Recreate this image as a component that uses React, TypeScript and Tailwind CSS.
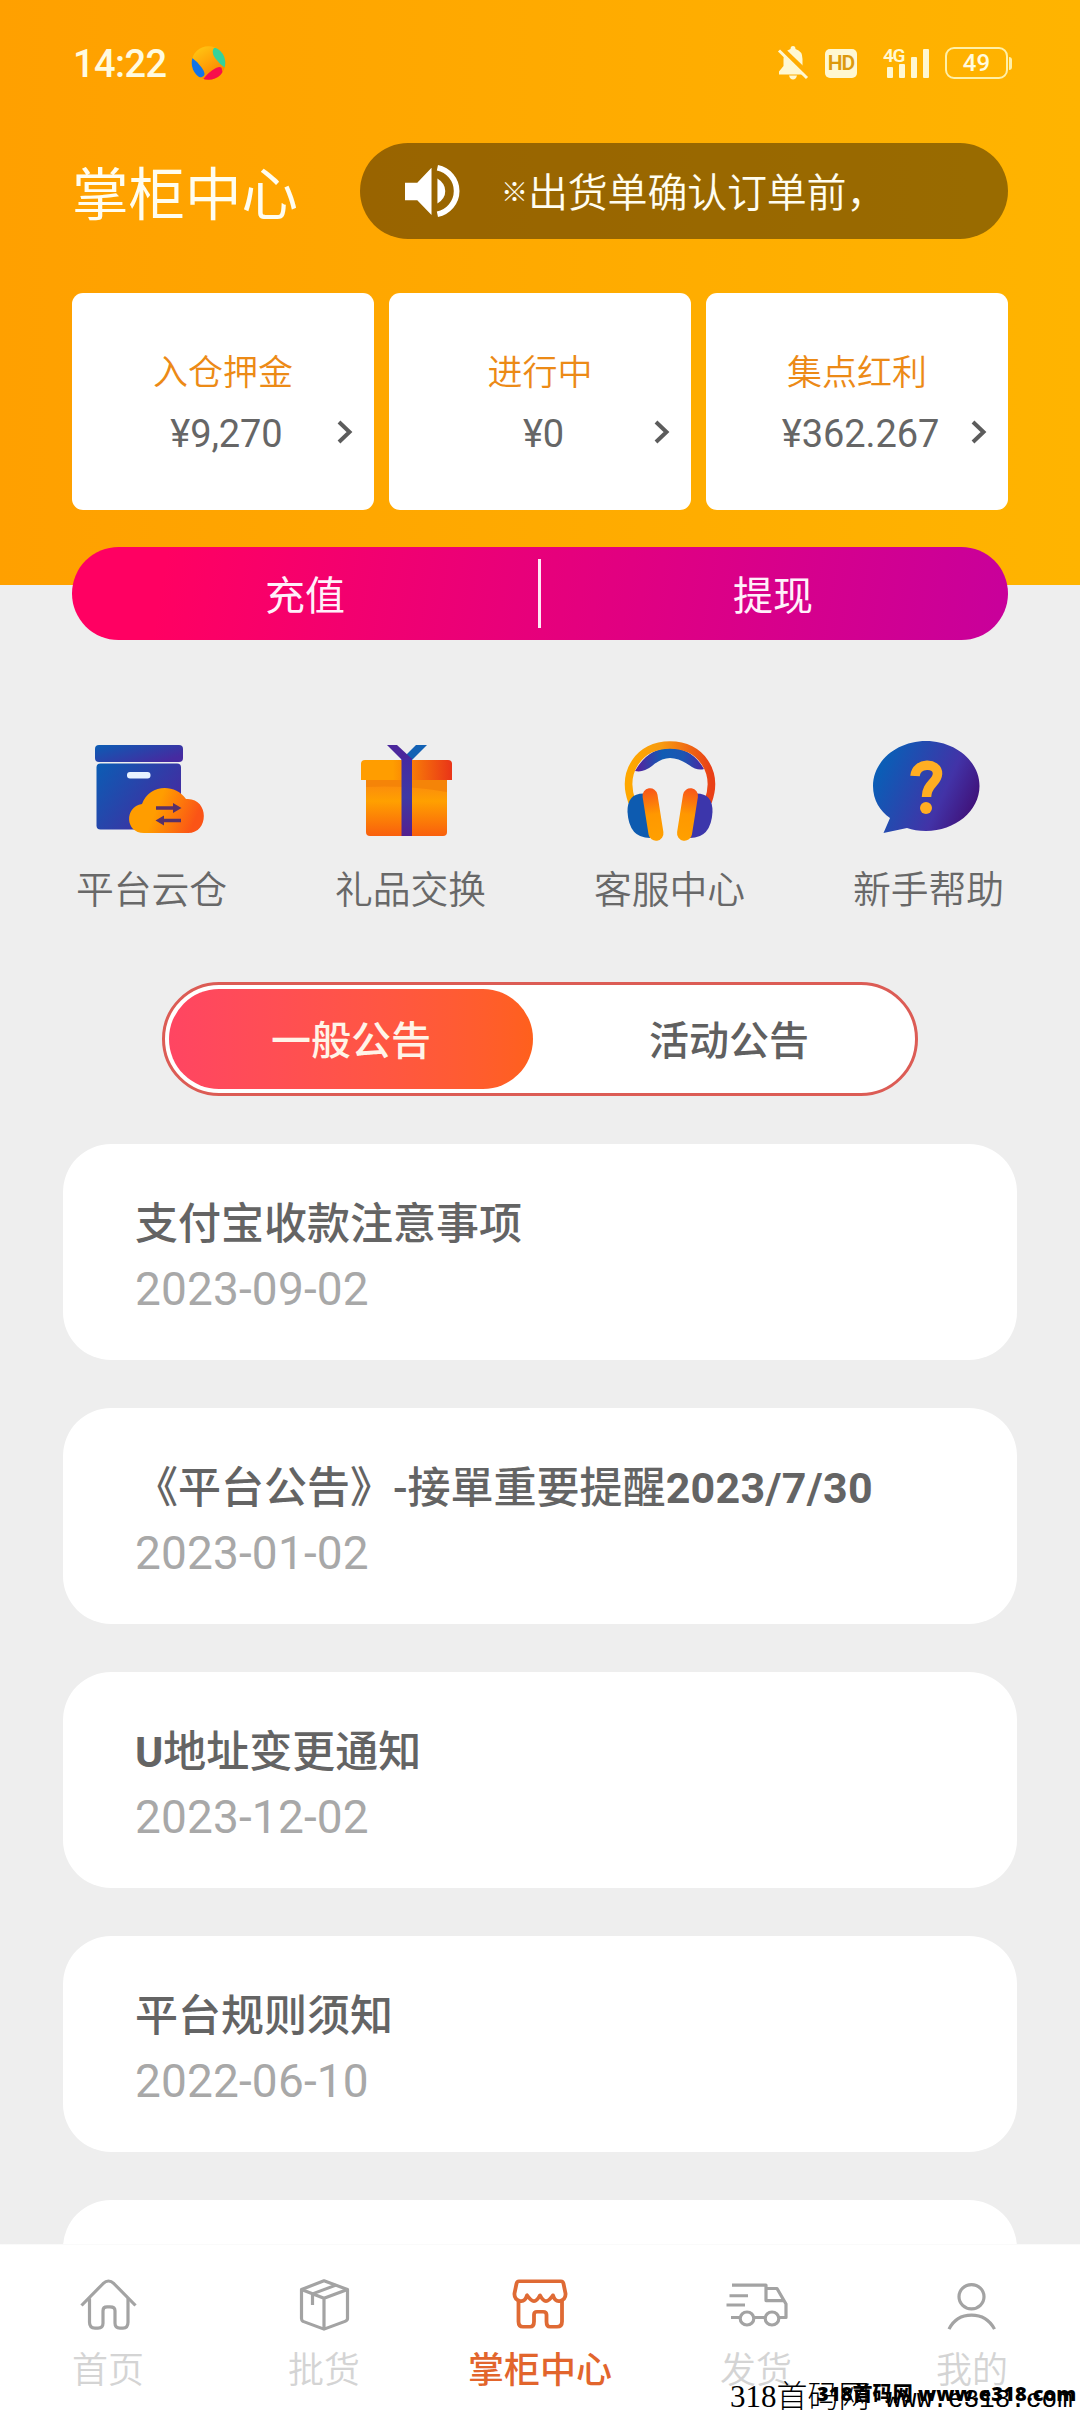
import React from "react";

const notices = [
  { title: "支付宝收款注意事项", date: "2023-09-02" },
  { title: "《平台公告》-接單重要提醒", suffix: "2023/7/30", date: "2023-01-02" },
  { prefix: "U", title: "地址变更通知", date: "2023-12-02" },
  { title: "平台规则须知", date: "2022-06-10" },
  { title: "", date: "" },
];

const balances = [
  { label: "入仓押金", value: "¥9,270" },
  { label: "进行中", value: "¥0" },
  { label: "集点红利", value: "¥362.267" },
];

function StatusBar() {
  return (
    <div className="flex h-[126px] items-start pl-[73px] pr-[68px] pt-[44.500px] text-[#fffbe0]">
      <span className="w-[94px] whitespace-nowrap text-[38px] font-medium leading-[38px] tracking-[-0.6px]">14:22</span>
      <svg className="ml-[24px] h-[36px] w-[36px]" viewBox="0 0 36 36">
        <defs>
          <clipPath id="ball"><circle cx="17.500" cy="18" r="16.800" /></clipPath>
          <linearGradient id="sun" x1="0.200" y1="0" x2="0.700" y2="0.800"><stop offset="0" stopColor="#ffc814" /><stop offset="0.600" stopColor="#ffa208" /><stop offset="1" stopColor="#f98a00" /></linearGradient>
        </defs>
        <g clipPath="url(#ball)">
          <circle cx="18" cy="18" r="18" fill="url(#sun)" />
          <path d="M0 12 Q6 16 11 23 Q16 30 11 32 Q6 33 0 32Z" fill="#1274e8" />
          <path d="M23 3 L36 2 V24 Q29 20 24 13 Q20 7 23 3Z" fill="#35d29b" />
          <path d="M11 36 Q17 27 25 23 Q31 20 31 25 Q32 30 33 36Z" fill="#f80f4b" />
        </g>
      </svg>
      <div className="ml-auto flex items-start">
        <svg className="h-[36px] w-[32px]" viewBox="0 0 32 36" fill="#fff8d2">
          <path d="M16 1 q2.500 0 2.500 3 q7 2 7 10 v7 l4.500 5.500 v3 H2 v-3 L6.500 21 v-7 q0-8 7-10 q0-3 2.500-3Z" />
          <path d="M12 30.500 h8 q-1 4 -4 4 t-4-4Z" />
          <path d="M3 2 L34 32" stroke="#ffad03" strokeWidth="5" />
          <path d="M2 5.500 L30 33" stroke="#fff8d2" strokeWidth="3" />
        </svg>
        <span className="ml-[16px] mt-[4.500px] flex h-[29px] w-[32px] items-center justify-center rounded-[5px] bg-[#fff8d2] text-[21px] font-semibold leading-none tracking-[-1px] text-[#dd9a0c]">HD</span>
        <svg className="ml-[25px] h-[36px] w-[49px]" viewBox="-1 0 49 36" fill="#fff8d2">
          <rect x="4" y="22" width="6" height="11" rx="1" />
          <rect x="16" y="19" width="6" height="14" rx="1" />
          <rect x="28" y="12" width="6" height="21" rx="1" />
          <rect x="40" y="4" width="6" height="29" rx="1" />
          <text x="0" y="16.500" fontSize="19" fontWeight="600" letterSpacing="-1.400">4G</text>
        </svg>
        <span className="ml-[14px] mt-[2.500px] flex h-[32px] w-[63px] items-center justify-center rounded-[9px] border-[2.500px] border-[#fff0a8] text-[24px] font-medium leading-none">49</span>
        <span className="ml-px mt-[12px] h-[13px] w-[3px] rounded-r-[3px] bg-[#fff0a8]" />
      </div>
    </div>
  );
}

function Speaker() {
  return (
    <svg className="ml-[45px] h-[54px] w-[55px] shrink-0" viewBox="0 0 56 56" preserveAspectRatio="none" fill="white">
      <path d="M0 19.500 H12.500 L27 4 V53 L12.500 37.500 H0Z" />
      <path d="M33 15 Q41 20 41 28 T33 41Z" />
      <path d="M33 4 A24.500 24.500 0 0 1 33 52" fill="none" stroke="white" strokeWidth="5.800" />
    </svg>
  );
}

function Header() {
  return (
    <header className="h-[585px] bg-linear-to-r from-[#ffa000] to-[#ffb400]">
      <StatusBar />
      <div className="flex h-[167px] items-start pl-[72px] pr-[72px] pt-[17px]">
        <h1 className="mt-[25px] w-[288px] whitespace-nowrap text-[56.500px] font-normal leading-none text-[#fffdf0]">掌柜中心</h1>
        <div className="flex h-[96px] flex-1 items-center rounded-full bg-black/40">
          <Speaker />
          <span className="ml-[41px] mt-[5px] flex items-center whitespace-nowrap text-[40px] font-[350] leading-none tracking-[-0.2px] text-[#fffdf0]">
            <span className="mr-px w-[26px] text-[27px] font-bold leading-none">※</span>出货单确认订单前，
          </span>
        </div>
      </div>
      <div className="grid grid-cols-3 gap-[15px] px-[72px]">
        {balances.map((b) => (
          <div key={b.label} className="relative flex h-[217px] flex-col items-center rounded-[11px] bg-white pt-[63px]">
            <span className="text-[35px] font-[350] leading-none text-[#ec8a16]">{b.label}</span>
            <span className="mt-[23.500px] pl-[7px] text-[38px] leading-none tracking-[-0.1px] text-[#666]">{b.value}</span>
            <svg className="absolute right-[21px] top-[127px] h-[24px] w-[16px]" viewBox="0 0 16 24" fill="none" stroke="#5c5c5c" strokeWidth="4">
              <path d="M2 2 L12.500 12 L2 22" />
            </svg>
          </div>
        ))}
      </div>
    </header>
  );
}

function WarehouseIcon() {
  return (
    <svg className="h-[104px] w-[120px]" viewBox="92 739 120 104">
      <defs>
        <linearGradient id="wb" x1="0" y1="0" x2="1" y2="0.6"><stop offset="0" stopColor="#0b5db4" /><stop offset="1" stopColor="#462aa0" /></linearGradient>
        <linearGradient id="wc" x1="0" y1="0" x2="1" y2="0.25"><stop offset="0.45" stopColor="#ff9d00" /><stop offset="1" stopColor="#fb5416" /></linearGradient>
      </defs>
      <rect x="95" y="745" width="88" height="17" rx="4" fill="url(#wb)" />
      <rect x="96.500" y="763.500" width="84.500" height="66" rx="4" fill="url(#wb)" />
      <rect x="127" y="772" width="23.500" height="6.500" rx="3" fill="#e8f2ff" />
      <path d="M144 833 C125 833 124 807 142 804 C149 784 175 783 186 799 C209 797 210 833 188 833Z" fill="url(#wc)" />
      <path d="M156 808 H176 M161 820.500 H181" stroke="#57306a" strokeWidth="3.600" />
      <path d="M173 803 L181.500 808 L173 813Z M164 815.500 L155.500 820.500 L164 825.500Z" fill="#57306a" />
    </svg>
  );
}

function GiftIcon() {
  return (
    <svg className="h-[104px] w-[120px]" viewBox="351 739 120 104">
      <defs>
        <linearGradient id="gl"><stop offset="0.350" stopColor="#ff9d00" /><stop offset="1" stopColor="#e93418" /></linearGradient>
        <linearGradient id="gb" x1="0" y1="0" x2="0" y2="1"><stop offset="0" stopColor="#fa8412" /><stop offset="0.400" stopColor="#ffa000" /><stop offset="1" stopColor="#f95f0d" /></linearGradient>
        <linearGradient id="gr" x1="0" y1="0" x2="0" y2="1"><stop offset="0" stopColor="#452aa2" /><stop offset="0.500" stopColor="#3e39a4" /><stop offset="1" stopColor="#53208f" /></linearGradient>
      </defs>
      <path d="M366 778 H447 V832 a4 4 0 0 1 -4 4 H370 a4 4 0 0 1 -4 -4Z" fill="url(#gb)" />
      <path d="M361 780 V764 a4 4 0 0 1 4-4 H448 a4 4 0 0 1 4 4 V780Z" fill="url(#gl)" />
      <path d="M366 780 H447 V792 Q405 785 366 787Z" fill="#f58408" />
      <path d="M427 745 H416 L404 757 L411 761Z" fill="#1261b4" />
      <path d="M387 745 H397 L411 758 L404 762Z" fill="#4b279c" />
      <path d="M401.500 836 V758 H412 V836Z" fill="url(#gr)" />
    </svg>
  );
}

function HeadphoneIcon() {
  return (
    <svg className="h-[104px] w-[120px]" viewBox="610 739 120 104">
      <defs>
        <linearGradient id="ha"><stop offset="0" stopColor="#ffa800" /><stop offset="0.400" stopColor="#f79a10" /><stop offset="1" stopColor="#e93f16" /></linearGradient>
        <linearGradient id="hc" x1="0" y1="0" x2="0" y2="1"><stop offset="0" stopColor="#f8541a" /><stop offset="0.500" stopColor="#ff9800" /><stop offset="1" stopColor="#ffa000" /></linearGradient>
        <linearGradient id="hi"><stop offset="0" stopColor="#5c1d9c" /><stop offset="0.400" stopColor="#0f5cb4" /><stop offset="0.700" stopColor="#1d55b2" /><stop offset="1" stopColor="#4b26a2" /></linearGradient>
      </defs>
      <path d="M635 771 Q648 748 670 748 T704 769 Q697 771 689 765 Q679 758 670 758 T652 766 Q643 773 635 771Z" fill="url(#hi)" />
      <path d="M632 802 C621 772 639 745 670 745 S719 772 708 802" fill="none" stroke="url(#ha)" strokeWidth="7.600" />
      <path d="M650 794 Q627 790 627.500 812 Q629 838 650 838Z" fill="#0d5bb0" />
      <path d="M690 794 Q713 790 712.500 812 Q711 838 690 838Z" fill="#3c36ab" />
      <rect x="-7.500" y="-26.500" width="15" height="53" rx="7.500" transform="translate(653 814.500) rotate(-9)" fill="url(#hc)" />
      <rect x="-7.500" y="-26.500" width="15" height="53" rx="7.500" transform="translate(687.500 814.500) rotate(9)" fill="url(#hc)" />
    </svg>
  );
}

function HelpIcon() {
  return (
    <svg className="h-[104px] w-[120px]" viewBox="869 739 120 104">
      <defs>
        <linearGradient id="qb" x1="0" y1="0.200" x2="1" y2="0.600"><stop offset="0.100" stopColor="#0b5db6" /><stop offset="0.700" stopColor="#4233a7" /><stop offset="1" stopColor="#40127a" /></linearGradient>
      </defs>
      <path d="M926 741 C955 741 979.500 761 979.500 786 S955 831 926 831 Q915 831 907 828 L883.500 833 L890 818 C880 811 873 800 873 786 C873 761 897 741 926 741Z" fill="url(#qb)" />
      <path d="M915 776 C916 762 938 762 937.500 774 C937 783 926.500 784 926.500 797" fill="none" stroke="#ffae22" strokeWidth="9.500" />
      <circle cx="926" cy="808" r="6" fill="#ffae22" />
    </svg>
  );
}

const shortcuts = [
  { label: "平台云仓", Icon: WarehouseIcon },
  { label: "礼品交换", Icon: GiftIcon },
  { label: "客服中心", Icon: HeadphoneIcon },
  { label: "新手帮助", Icon: HelpIcon },
];

const line = {
  fill: "none",
  stroke: "#a3a3a3",
  strokeWidth: 3.2,
  strokeLinejoin: "round" as const,
  preserveAspectRatio: "none",
};

function HomeIcon() {
  return (
    <svg className="h-[58px] w-[70px]" viewBox="73 2278 70 60" {...line}>
      <path d="M81.500 2309.500 L103 2287 Q108.500 2281.500 114 2287 L135.500 2309.500" />
      <path d="M89.500 2302 V2327 Q89.500 2333 95 2333 H98 Q103 2333 103 2328 V2315 Q103 2311 107 2311 H110 Q115 2311 115 2315 V2328 Q115 2333 120 2333 H123 Q128 2333 128 2327 V2302" />
    </svg>
  );
}

function BoxIcon() {
  return (
    <svg className="h-[58px] w-[70px]" viewBox="289 2278 70 60" {...line}>
      <path d="M324 2284 L347.500 2293 V2323 Q347.500 2325 345 2326 L324 2334 L303 2326 Q301.500 2325 301.500 2323 V2293Z" />
      <path d="M301.500 2293 L324 2302 L347.500 2293 M324 2302 V2334 M312.500 2309 V2297.500 L336 2288.500" />
    </svg>
  );
}

function ShopIcon() {
  return (
    <svg className="h-[58px] w-[70px]" viewBox="505 2278 70 60" preserveAspectRatio="none" fill="none" stroke="#df6a34" strokeWidth="3.800" strokeLinejoin="round">
      <path d="M519 2284.500 H561 Q563 2284.500 563.500 2287 L565.500 2297 Q566 2303 560 2305 Q555 2306 553 2299 Q549 2305 546 2305 T540 2299 Q537 2305 534 2305 T527 2299 Q525 2306 520 2305 Q514 2303 514.500 2297 L516.500 2287 Q517 2284.500 519 2284.500Z" />
      <path d="M518.500 2305 V2326 Q518.500 2331.500 523 2331.500 H530 Q534 2331.500 534 2326 V2319 Q534 2316 537 2316 H543 Q546.500 2316 546.500 2319 V2326 Q546.500 2331.500 550 2331.500 H557 Q562 2331.500 562 2326 V2305" />
    </svg>
  );
}

function TruckIcon() {
  return (
    <svg className="h-[58px] w-[70px]" viewBox="721 2278 70 60" {...line}>
      <path d="M732 2288.500 H766 V2304.500 H784 M766 2292 H777 L786 2308 V2322 H779 M765 2322 H754 M740 2322 H731 M729.500 2299.500 H748 M726.500 2309 H745" />
      <circle cx="747" cy="2323" r="6.800" />
      <circle cx="772" cy="2323" r="6.800" />
    </svg>
  );
}

function PersonIcon() {
  return (
    <svg className="h-[58px] w-[70px]" viewBox="937 2278 70 60" {...line}>
      <circle cx="971.500" cy="2300.500" r="12.500" />
      <path d="M949 2334 Q956 2319.500 971.500 2319.500 T994.500 2334" />
    </svg>
  );
}

const tabs = [
  { label: "首页", Icon: HomeIcon, active: false },
  { label: "批货", Icon: BoxIcon, active: false },
  { label: "掌柜中心", Icon: ShopIcon, active: true },
  { label: "发货", Icon: TruckIcon, active: false },
  { label: "我的", Icon: PersonIcon, active: false },
];

export default function App() {
  return (
    <div className="relative flex h-[2412px] w-[1080px] flex-col overflow-hidden bg-[#eee] font-['Roboto','Noto_Sans_CJK_SC',sans-serif]">
      <div className="min-h-0 flex-1 overflow-hidden">
        <Header />

        <div className="relative mx-[72px] -mt-[38px] flex h-[93px] items-center rounded-full bg-linear-[100deg,#ff0062_10%,#c8009b] text-[40px] leading-none text-[#fff0fa]">
          <span className="w-[466px] pt-[6px] text-center">充值</span>
          <span className="h-[69px] w-[3px] bg-[#ffe6f6]" />
          <span className="flex-1 pr-[3px] pt-[6px] text-center">提现</span>
        </div>

        <div className="mt-[99px] grid grid-cols-4 px-[22px]">
          {shortcuts.map(({ label, Icon }) => (
            <div key={label} className="flex flex-col items-center">
              <Icon />
              <span className="mt-[28px] text-[37.800px] font-[350] leading-[38px] text-[#686868]">{label}</span>
            </div>
          ))}
        </div>

        <div className="mx-auto mt-[73px] flex h-[114px] w-[756px] items-center rounded-full border-[3px] border-[#dc5c55] bg-white p-[4px] text-[40px] font-medium leading-none">
          <span className="flex h-[100px] w-[364px] items-center justify-center rounded-full bg-linear-to-r from-[#ff4562] to-[#ff601c] pt-[6px] text-[#fff4e8]">一般公告</span>
          <span className="flex-1 pl-[14px] pt-[6px] text-center text-[#606060]">活动公告</span>
        </div>

        <div className="mt-[48px] flex flex-col gap-[48px] px-[63px]">
          {notices.map((n, i) => (
            <article key={i} className="h-[216px] rounded-[48px] bg-white pl-[72px] pt-[59px]">
              <h2 className="h-[43px] whitespace-nowrap text-[43px] font-medium leading-[43px] text-[#646464]">
                {n.prefix && <span className="font-bold">{n.prefix}</span>}
                {n.title}
                {n.suffix && <span className="font-bold tracking-[0.3px]">{n.suffix}</span>}
              </h2>
              <p className="mt-[20px] text-[46px] leading-[46px] tracking-[0.15px] text-[#a8a8a8]">{n.date}</p>
            </article>
          ))}
        </div>
      </div>

      <nav className="grid h-[168px] shrink-0 grid-cols-5 border-t border-[#fafafa] bg-white pt-[30px]">
        {tabs.map(({ label, Icon, active }) => (
          <div key={label} className="flex flex-col items-center">
            <Icon />
            <span className={active ? "mt-[20px] text-[36px] font-medium leading-[36px] text-[#e2652c]" : "mt-[20px] text-[36px] font-[350] leading-[36px] text-[#d4d4d4]"}>{label}</span>
          </div>
        ))}
      </nav>

      <div className="absolute left-[730px] top-[2381px] flex items-baseline whitespace-nowrap text-[31px] leading-[31px] text-black">
        <span className="font-['Liberation_Serif','Noto_Sans_CJK_SC',serif] font-light">318首码网</span>
        <span className="ml-[16px] font-['Liberation_Mono',monospace] text-[26px]">www.e318.com</span>
      </div>
      <div className="absolute left-[817px] top-[2381px] whitespace-nowrap font-['Open_Sans','Noto_Sans_CJK_SC',sans-serif] text-[20px] font-extrabold leading-[26px] tracking-[0.1px] text-black">
        318首码网 www.e318.com
      </div>
    </div>
  );
}
